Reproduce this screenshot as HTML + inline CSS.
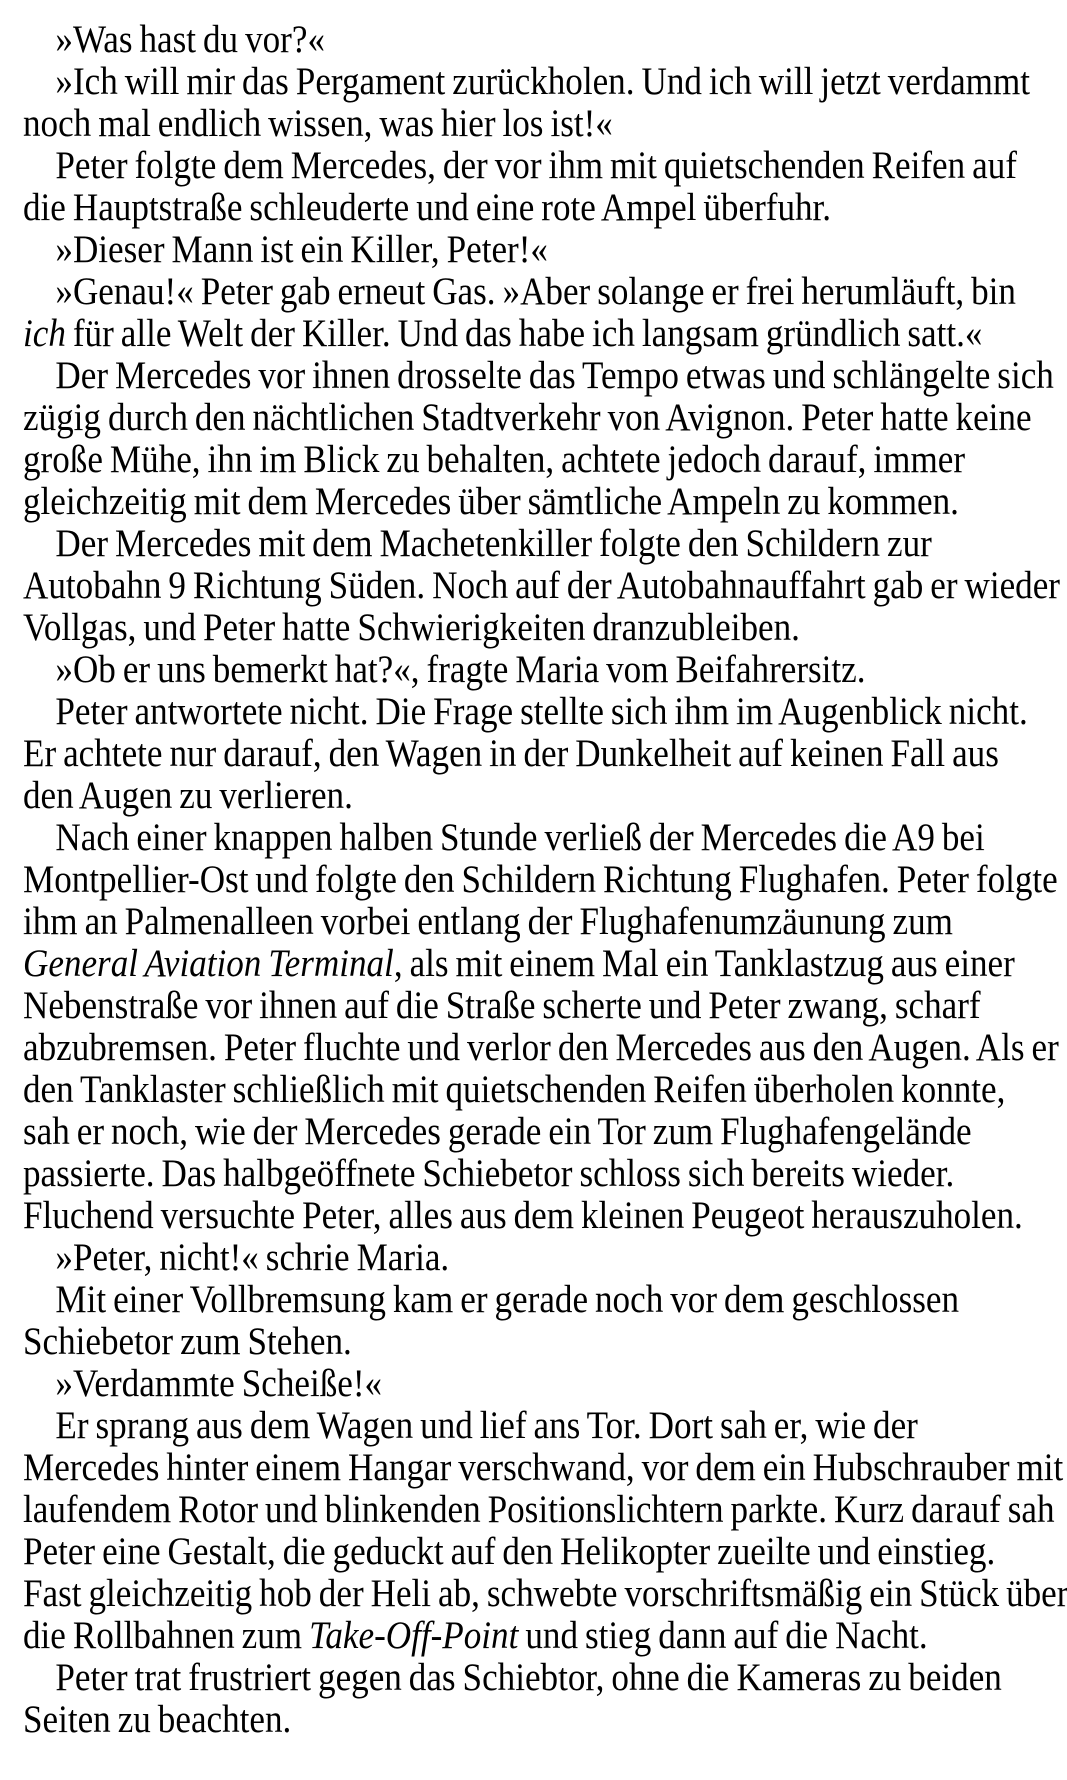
<!DOCTYPE html>
<html><head><meta charset="utf-8"><style>
html,body{margin:0;padding:0;background:#fff;width:1067px;height:1780px;overflow:hidden}
#t{position:absolute;left:23px;top:19px;transform:scaleX(0.9);transform-origin:0 0;font-family:"Liberation Serif","Times New Roman",serif;font-size:39px;line-height:42px;color:#000;white-space:nowrap;word-spacing:-2px}
#t div{height:42px}
.i{padding-left:36px}
</style></head><body><div id="t">
<div class="i">»Was hast du vor?«</div>
<div class="i">»Ich will mir das Pergament zurückholen. Und ich will jetzt verdammt</div>
<div>noch mal endlich wissen, was hier los ist!«</div>
<div class="i">Peter folgte dem Mercedes, der vor ihm mit quietschenden Reifen auf</div>
<div>die Hauptstraße schleuderte und eine rote Ampel überfuhr.</div>
<div class="i">»Dieser Mann ist ein Killer, Peter!«</div>
<div class="i">»Genau!« Peter gab erneut Gas. »Aber solange er frei herumläuft, bin</div>
<div><i>ich</i> für alle Welt der Killer. Und das habe ich langsam gründlich satt.«</div>
<div class="i">Der Mercedes vor ihnen drosselte das Tempo etwas und schlängelte sich</div>
<div>zügig durch den nächtlichen Stadtverkehr von Avignon. Peter hatte keine</div>
<div>große Mühe, ihn im Blick zu behalten, achtete jedoch darauf, immer</div>
<div>gleichzeitig mit dem Mercedes über sämtliche Ampeln zu kommen.</div>
<div class="i">Der Mercedes mit dem Machetenkiller folgte den Schildern zur</div>
<div>Autobahn 9 Richtung Süden. Noch auf der Autobahnauffahrt gab er wieder</div>
<div>Vollgas, und Peter hatte Schwierigkeiten dranzubleiben.</div>
<div class="i">»Ob er uns bemerkt hat?«, fragte Maria vom Beifahrersitz.</div>
<div class="i">Peter antwortete nicht. Die Frage stellte sich ihm im Augenblick nicht.</div>
<div>Er achtete nur darauf, den Wagen in der Dunkelheit auf keinen Fall aus</div>
<div>den Augen zu verlieren.</div>
<div class="i">Nach einer knappen halben Stunde verließ der Mercedes die A9 bei</div>
<div>Montpellier-Ost und folgte den Schildern Richtung Flughafen. Peter folgte</div>
<div>ihm an Palmenalleen vorbei entlang der Flughafenumzäunung zum</div>
<div><i>General Aviation Terminal</i>, als mit einem Mal ein Tanklastzug aus einer</div>
<div>Nebenstraße vor ihnen auf die Straße scherte und Peter zwang, scharf</div>
<div>abzubremsen. Peter fluchte und verlor den Mercedes aus den Augen. Als er</div>
<div>den Tanklaster schließlich mit quietschenden Reifen überholen konnte,</div>
<div>sah er noch, wie der Mercedes gerade ein Tor zum Flughafengelände</div>
<div>passierte. Das halbgeöffnete Schiebetor schloss sich bereits wieder.</div>
<div>Fluchend versuchte Peter, alles aus dem kleinen Peugeot herauszuholen.</div>
<div class="i">»Peter, nicht!« schrie Maria.</div>
<div class="i">Mit einer Vollbremsung kam er gerade noch vor dem geschlossen</div>
<div>Schiebetor zum Stehen.</div>
<div class="i">»Verdammte Scheiße!«</div>
<div class="i">Er sprang aus dem Wagen und lief ans Tor. Dort sah er, wie der</div>
<div>Mercedes hinter einem Hangar verschwand, vor dem ein Hubschrauber mit</div>
<div>laufendem Rotor und blinkenden Positionslichtern parkte. Kurz darauf sah</div>
<div>Peter eine Gestalt, die geduckt auf den Helikopter zueilte und einstieg.</div>
<div>Fast gleichzeitig hob der Heli ab, schwebte vorschriftsmäßig ein Stück über</div>
<div>die Rollbahnen zum <i>Take-Off-Point</i> und stieg dann auf die Nacht.</div>
<div class="i">Peter trat frustriert gegen das Schiebtor, ohne die Kameras zu beiden</div>
<div>Seiten zu beachten.</div>
</div></body></html>
